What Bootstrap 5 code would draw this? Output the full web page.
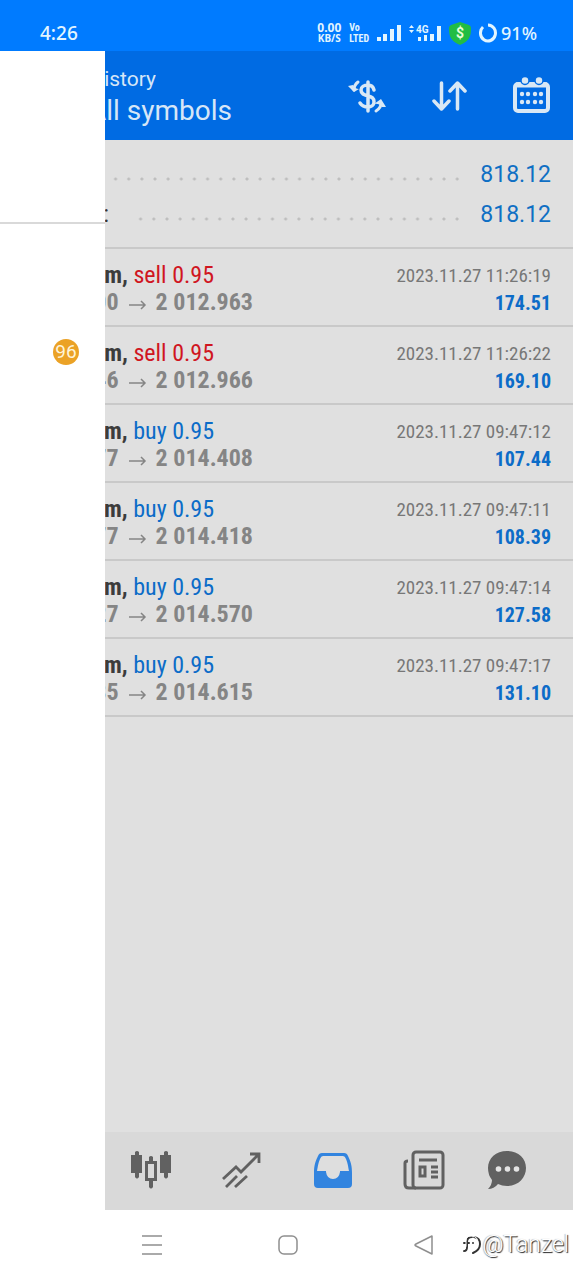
<!DOCTYPE html>
<html lang="en">
<head>
<meta charset="utf-8">
<meta name="viewport" content="width=device-width, initial-scale=1">
<title>History</title>
<link href="https://cdn.jsdelivr.net/npm/bootstrap@5.3.0/dist/css/bootstrap.min.css" rel="stylesheet">
<style>
body{font-family:Roboto,"Liberation Sans",sans-serif;background:#fff}
svg{display:block;flex:none}
.status-bar{height:51px;background:#007bff;color:#e2f5ff;padding:14px 36px 0 40px}
.status-tiny{font:700 10px/11px "Noto Sans",sans-serif;text-align:center}
.status-rate{font-size:12px}
.status-volte{font:700 10px/11px "Roboto Condensed",sans-serif}
.status-clock{font:500 19px/38px "Noto Sans",sans-serif}
.status-pct{font:500 18px/38px "Noto Sans",sans-serif}
.drawer{width:105px;background:#fff;flex:none}
.drawer-head{height:173px;border-bottom:2px solid #d9d9d9}
.count{width:26px;height:26px;background:#eba226;color:#fff4d8;font-size:19px;margin:115px 0 0 53px}
.screen{background:#e0e0e0;min-width:0}
.top-bar{height:89px;background:#006be3;color:#d6e6f7;padding-right:23px}
.top-actions{gap:46px}
.clip-end{display:flex;justify-content:flex-end;overflow:hidden;white-space:pre}
.sub-title{width:51px;font-size:21px;line-height:24px}
.main-title{width:127px;font-size:28px;line-height:36px;margin-top:2px}
.icon-btn{background:none;border:0;padding:0;color:#d9e8f5}
.summary{padding:15px 22px 12px 0;border-bottom:2px solid #c9c9c9;height:109px}
.sum-row{height:40px;font-size:23px;color:#0f6fc4}
.leader{height:4px;margin-top:8px;background:radial-gradient(circle,#bebebe 1px,#e0e0e0 2px) 0 0/13px 4px round}
.sum-label{color:#333;width:4px;margin-right:25px;line-height:24px}
.deal{height:78px;padding:12px 22px 0 0;border-bottom:2px solid #c9c9c9;font-family:"Roboto Condensed","Liberation Sans Narrow",sans-serif;white-space:nowrap}
.deal-name{width:109px;font-size:24px;line-height:28px;color:#d0161f}
.deal-name.is-buy{color:#0c6cc8}
.deal-name strong{color:#3c3c3c}
.deal-price{width:148px;font-size:24px;line-height:26px;font-weight:700;color:#858585}
.deal-arrow{align-self:center;margin:6px 9px 0 10px}
.deal-time{font-size:19px;line-height:30px;color:#777}
.deal-profit{font-size:20px;line-height:24px;font-weight:700;color:#0c6cc8}
.tab-bar{display:grid;grid-template-columns:5fr 5fr 5fr 5fr 4fr;justify-items:center;align-items:center;height:78px;background:#d9d9d9;color:#616161;padding:0 30px 2px 0}
.tab-current{color:#3284df}
.sys-bar{height:70px;padding-left:142px;color:#8f8f8f}
.back-btn{margin-right:28px}
.water{font-size:23px;line-height:30px;color:#fff;text-shadow:1px 1px 1px #222,-1px 0 1px #bbb;font-weight:300}
</style>
</head>
<body class="d-flex flex-column min-vh-100">
<header class="status-bar d-flex align-items-center justify-content-between">
  <span class="status-clock">4:26</span>
  <div class="d-flex align-items-center">
    <div class="status-tiny me-2"><div class="status-rate">0.00</div><div>KB/S</div></div>
    <div class="status-volte me-2">Vo<br>LTED</div>
    <svg width="24" height="18" fill="currentColor"><path d="M0 13h4v4H0zM6 10h4v7H6zM13 5h4v12h-4zM20 1h4v16h-4z"/></svg>
    <svg class="ms-2" width="32" height="20" fill="currentColor"><path d="m0 5 2.500-3L5 5zM0 7h5l-2.500 3zM9 14h3v4H9zM15 12h3v6h-3zM21 11h4v7h-4zM28 3h4v15h-4z"/><text x="7" y="10" font-size="10" font-weight="700">4G</text></svg>
    <svg class="ms-2" width="22" height="24"><path d="M11 1 20 4q2 1 2 3c0 9-2 13-11 17C2 20 0 16 0 7q0-2 2-3z" fill="#22bd43"/><text x="11" y="17" text-anchor="middle" font-size="14" font-weight="700" fill="#e8ffd8">$</text></svg>
    <svg class="ms-2" width="18" height="20" fill="none" stroke="currentColor" stroke-width="3"><path d="M9 2A7.500 8 0 1 1 4 4"/></svg>
    <span class="status-pct ms-1">91%</span>
  </div>
</header>

<div class="d-flex flex-grow-1">
  <aside class="drawer">
    <div class="drawer-head"></div>
    <div class="count rounded-circle d-flex align-items-center justify-content-center">96</div>
  </aside>

  <main class="screen flex-grow-1 d-flex flex-column">
    <div class="top-bar d-flex justify-content-between">
      <div class="pt-3">
        <div class="sub-title clip-end">istory</div>
        <h1 class="main-title clip-end fw-normal mb-0">All symbols</h1>
      </div>
      <div class="top-actions d-flex align-items-center">
        <button class="icon-btn" aria-label="Currency"><svg width="38" height="38" viewBox="0 0 38 38" fill="none" stroke="currentColor" stroke-width="3.500" stroke-linecap="round"><path d="M20 5v29M26 13c-1-4-4-5-6-5-4 0-7 2-7 5 0 4 3 5 7 6s6 2 6 6c0 3-3 5-6 5-3 0-6-1-8-4"/><path d="M10 5q-4 3-4 8" stroke-width="3"/><path d="m0 9 6 6 5-3q-4 0-6-4zM38 30l-5-8-7 5q5-1 8 3z" fill="currentColor" stroke="none"/><path d="M28 34q5-3 5-8" stroke-width="3"/></svg></button>
        <button class="icon-btn" aria-label="Sort"><svg width="35" height="32" viewBox="0 0 35 32" fill="none" stroke="currentColor" stroke-width="3.500" stroke-linecap="round" stroke-linejoin="round"><path d="M9.500 3v25M2 21l7.500 8 7.500-8M25.500 29V4M18 11l7.500-8 7.500 8"/></svg></button>
        <button class="icon-btn" aria-label="Period"><svg width="37" height="38" viewBox="0 0 37 38" fill="none" stroke="currentColor"><rect x="2" y="7" width="33" height="27" rx="3" stroke-width="4"/><path d="M3 8h31" stroke-width="5"/><g fill="currentColor" stroke="#006be3" stroke-width="1.500"><circle cx="12" cy="3.500" r="4"/><circle cx="26" cy="3.500" r="4"/></g><g fill="currentColor" stroke="none"><circle cx="9" cy="17" r="2.200"/><circle cx="15" cy="17" r="2.200"/><circle cx="22" cy="17" r="2.200"/><circle cx="28" cy="17" r="2.200"/><circle cx="9" cy="25" r="2.200"/><circle cx="15" cy="25" r="2.200"/><circle cx="22" cy="25" r="2.200"/><circle cx="28" cy="25" r="2.200"/></g></svg></button>
      </div>
    </div>

    <section class="summary">
      <div class="sum-row d-flex align-items-center"><div class="leader flex-grow-1 ms-1 me-3"></div><span>818.12</span></div>
      <div class="sum-row d-flex align-items-center"><span class="sum-label clip-end">:</span><div class="leader flex-grow-1 me-3"></div><span>818.12</span></div>
    </section>

    <section id="deals"></section>

    <nav class="tab-bar mt-auto">
      <button class="icon-btn text-reset" aria-label="Quotes"><svg width="44" height="42" viewBox="0 0 44 42" fill="currentColor"><path d="M6 3q2-2 4 0v3h3v18h-3v4q-2 3-4 0v-4H2V6h4zM35 3q2-2 4 0v3h3v18h-3v4q-2 3-4 0v-4h-4V6h4z"/><path d="M20 8q2-2 4 0v4h4v20h-4v6q-2 3-4 0v-6h-4V12h4zm-1 7v14h6V15z" fill-rule="evenodd"/></svg></button>
      <button class="icon-btn text-reset" aria-label="Charts"><svg width="40" height="38" viewBox="0 0 40 38" fill="none" stroke="currentColor" stroke-width="2.800"><path d="m1 28 13-12 5 5L36 4M28 3h9v9M4 36l11-11M13 36l12-11"/></svg></button>
      <button class="icon-btn tab-current" aria-label="History"><svg width="40" height="38" viewBox="0 0 40 38"><path d="M9 2h22q3 0 4 3c3 6 4 10 4 17v11q0 4-4 4H5q-4 0-4-4V22C1 15 2 11 5 5q1-3 4-3z" fill="currentColor"/><path d="M10 5h20q2 0 3 3c2 5 2 7 3 12h-9v1q-1 7-7 7t-7-7v-1H4C5 15 5 13 7 8q1-3 3-3z" fill="#dedede"/></svg></button>
      <button class="icon-btn text-reset" aria-label="News"><svg width="42" height="40" viewBox="0 0 42 40" fill="none" stroke="currentColor" stroke-width="3"><rect x="10" y="2" width="30" height="36" rx="3"/><path d="M13 38H6q-4 0-4-4V13q0-2 3-2M16 10h18M28 17h7M28 22h7M28 27h7"/><rect x="17" y="17" width="5" height="9"/></svg></button>
      <button class="icon-btn text-reset" aria-label="Messages"><svg width="40" height="40" viewBox="0 0 40 40"><path d="M20 1c11 0 19 7 19 17s-8 18-19 18q-5 0-9-2-4 5-10 5 4-4 4-9-4-5-4-12C1 8 9 1 20 1z" fill="currentColor"/><g fill="#e4e4e4"><circle cx="11.500" cy="19" r="2.800"/><circle cx="20.500" cy="19" r="2.800"/><circle cx="29.500" cy="19" r="2.800"/></g></svg></button>
    </nav>
  </main>
</div>

<footer class="sys-bar d-flex align-items-center justify-content-between">
  <button class="icon-btn text-reset" aria-label="Menu"><svg width="20" height="20" fill="none" stroke="currentColor" stroke-width="1.500"><path d="M0 1h20M0 10h20M0 19h20"/></svg></button>
  <button class="icon-btn text-reset" aria-label="Home"><svg width="20" height="20" fill="none" stroke="currentColor" stroke-width="1.500"><rect x="1" y="1" width="18" height="18" rx="5"/></svg></button>
  <div class="d-flex align-items-center">
    <button class="icon-btn text-reset back-btn" aria-label="Back"><svg width="20" height="20" fill="none" stroke="currentColor" stroke-width="1.500"><path d="M18 1v18L2 11q-2-1 0-2z" stroke-linejoin="round"/></svg></button>
    <div class="water d-flex align-items-center pe-1"><svg width="20" height="22" fill="none" stroke-linecap="round"><path d="M2 17q3 0 3-4V8q0-5 5-5M2 9h5M12 3q6 1 6 7 0 6-7 9" stroke="#333" stroke-width="2"/><path d="M1 16q3 0 3-4V7q0-5 5-5 7 0 7 7 0 6-6 8" stroke="#fff"/><circle cx="11" cy="9" r="1" fill="#333"/></svg><span>@Tanzel</span></div>
  </div>
</footer>

<script>
const deals=[
 ["sell","00","2 012.963","11:26:19","174.51"],
 ["sell","46","2 012.966","11:26:22","169.10"],
 ["buy","77","2 014.408","09:47:12","107.44"],
 ["buy","77","2 014.418","09:47:11","108.39"],
 ["buy","27","2 014.570","09:47:14","127.58"],
 ["buy","35","2 014.615","09:47:17","131.10"]];
document.getElementById("deals").innerHTML=deals.map(([side,open,close,time,profit])=>`
<article class="deal d-flex justify-content-between">
  <div><div class="deal-name clip-end is-${side}"><strong>m, </strong>${side} 0.95</div>
  <div class="deal-price clip-end">${open}<svg class="deal-arrow" width="18" height="10" fill="none" stroke="currentColor" stroke-width="1.500"><path d="M0 5h16M12 1l4 4-4 4"/></svg>${close}</div></div>
  <div class="text-end"><div class="deal-time">2023.11.27 ${time}</div><div class="deal-profit">${profit}</div></div>
</article>`).join("");
</script>
<script src="https://cdn.jsdelivr.net/npm/bootstrap@5.3.0/dist/js/bootstrap.bundle.min.js"></script>
</body>
</html>
